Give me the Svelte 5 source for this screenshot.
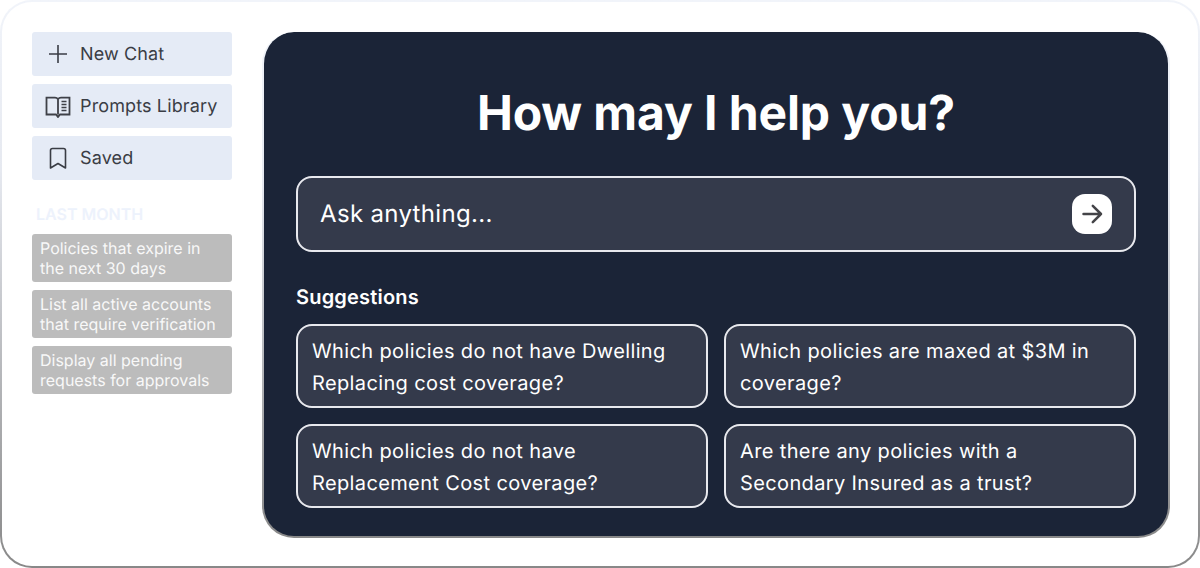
<script>
  const history = [
    'Policies that expire in the next 30 days',
    'List all active accounts that require verification',
    'Display all pending requests for approvals'
  ];
  const suggestions = [
    'Which policies do not have Dwelling Replacing cost coverage?',
    'Which policies are maxed at $3M in coverage?',
    'Which policies do not have Replacement Cost coverage?',
    'Are there any policies with a Secondary Insured as a trust?'
  ];
</script>

<div class="shell">
  <aside class="side">
    <button class="nav">
      <svg width="26" height="24" viewBox="0 0 26 24" fill="none" stroke="#3a3d45" stroke-width="1.6"><path d="M13 3v18M4 12h18"/></svg>
      <span>New Chat</span>
    </button>
    <button class="nav">
      <svg width="26" height="24" viewBox="0 0 26 24" fill="none" stroke="#3f4148" stroke-width="1.800"><path d="M1.500 3.700H10Q12 3.700 13 5.200Q14 3.700 16 3.700H24.500V20.500H15L13 23L11 20.500H1.500zM13 5.200V20.500"/><path d="M16.500 7.500h5M16.500 10.500h5M16.500 13.500h5M16.500 16.500h5" stroke-width="1.400"/></svg>
      <span>Prompts Library</span>
    </button>
    <button class="nav">
      <svg width="26" height="24" viewBox="0 0 26 24" fill="none" stroke="#3a3d45" stroke-width="1.6"><path d="M5.500 4.500a2 2 0 0 1 2-2h11a2 2 0 0 1 2 2V22L13 17.500 5.500 22z" stroke-linejoin="round"/></svg>
      <span>Saved</span>
    </button>

    <h2>LAST MONTH</h2>
    <ul>
      {#each history as item}
        <li>{item}</li>
      {/each}
    </ul>
  </aside>

  <main class="panel">
    <h1>How may I help you?</h1>
    <div class="ask">
      <span>Ask anything...</span>
      <button class="send" aria-label="Send">
        <svg width="24" height="24" viewBox="0 0 24 24" fill="none" stroke="#444448" stroke-width="2.500" stroke-linecap="round" stroke-linejoin="round"><path d="M3.500 12H21M12.800 3.800L21 12l-8.200 8.200"/></svg>
      </button>
    </div>
    <h3>Suggestions</h3>
    <div class="grid">
      {#each suggestions as s}
        <button class="sug">{s}</button>
      {/each}
    </div>
  </main>
</div>

<style>
  :global(body) {
    margin: 0;
    background: #fff;
    font-family: Inter, "Liberation Sans", sans-serif;
    text-rendering: geometricPrecision;
  }
  .shell {
    box-sizing: border-box;
    width: 1200px;
    height: 568px;
    display: flex;
    gap: 30px;
    padding: 30px;
    border: 2px solid transparent;
    border-radius: 32px;
    background:
      linear-gradient(#fff, #fff) padding-box,
      linear-gradient(180deg, #f1f4fa 0%, #e6e9f0 30%, #888 100%) border-box;
  }
  .side {
    width: 200px;
    flex: none;
    display: flex;
    flex-direction: column;
  }
  .nav {
    height: 44px;
    margin-bottom: 8px;
    padding: 0;
    border: 0;
    border-radius: 3px;
    background: #e5ebf6;
    display: flex;
    align-items: center;
    gap: 9px;
    color: #3a3d45;
    font: 400 18px/22px Inter, sans-serif;
    letter-spacing: 0.13px;
    text-align: left;
    text-rendering: geometricPrecision;
  }
  .nav svg {
    flex: none;
    margin-left: 13px;
  }
  .nav span {
    margin-top: 2px;
  }
  h2 {
    margin: 14px 0 8px 4px;
    font: 600 16px/24px Inter, sans-serif;
    color: #edf2fc;
  }
  ul {
    list-style: none;
    margin: 0;
    padding: 0;
    display: flex;
    flex-direction: column;
    gap: 8px;
  }
  li {
    box-sizing: border-box;
    height: 48px;
    padding: 4px 8px;
    border-radius: 3px;
    background: #bcbcbc;
    color: #f8f8f8;
    font: 400 16px/20px Inter, sans-serif;
  }
  .panel {
    box-sizing: border-box;
    width: 908px;
    height: 506px;
    padding: 51px 32px 0;
    border: 2px solid transparent;
    border-top: 0;
    border-radius: 32px;
    background:
      linear-gradient(#1b2437, #1b2437) padding-box,
      linear-gradient(180deg, #f1f4fa 0%, #e6e9f0 30%, #888 100%) border-box;
    color: #fff;
  }
  h1 {
    margin: 0;
    height: 60px;
    font: 700 48px/60px Inter, sans-serif;
    letter-spacing: -0.1px;
    text-align: center;
  }
  .ask {
    box-sizing: border-box;
    height: 76px;
    margin-top: 33px;
    padding: 0 22px;
    display: flex;
    align-items: center;
    justify-content: space-between;
    border: 2px solid #e8e9ee;
    border-radius: 16px;
    background: #343a4b;
    font: 400 24px Inter, sans-serif;
    letter-spacing: 0.33px;
  }
  .ask span {
    margin-top: -2px;
  }
  .send {
    width: 40px;
    height: 40px;
    padding: 0;
    border: 0;
    border-radius: 13px;
    background: #fff;
    display: flex;
    align-items: center;
    justify-content: center;
  }
  h3 {
    margin: 31px 0 13px;
    font: 600 20px/28px Inter, sans-serif;
    letter-spacing: 0.2px;
  }
  .grid {
    display: grid;
    grid-template-columns: 412px 412px;
    gap: 16px;
  }
  .sug {
    box-sizing: border-box;
    height: 84px;
    padding: 9px 14px 11px;
    border: 2px solid #e8e9ee;
    border-radius: 16px;
    background: #343a4b;
    color: #fff;
    font: 400 20px/32px Inter, sans-serif;
    letter-spacing: 0.37px;
    text-align: left;
    text-rendering: geometricPrecision;
  }
</style>
